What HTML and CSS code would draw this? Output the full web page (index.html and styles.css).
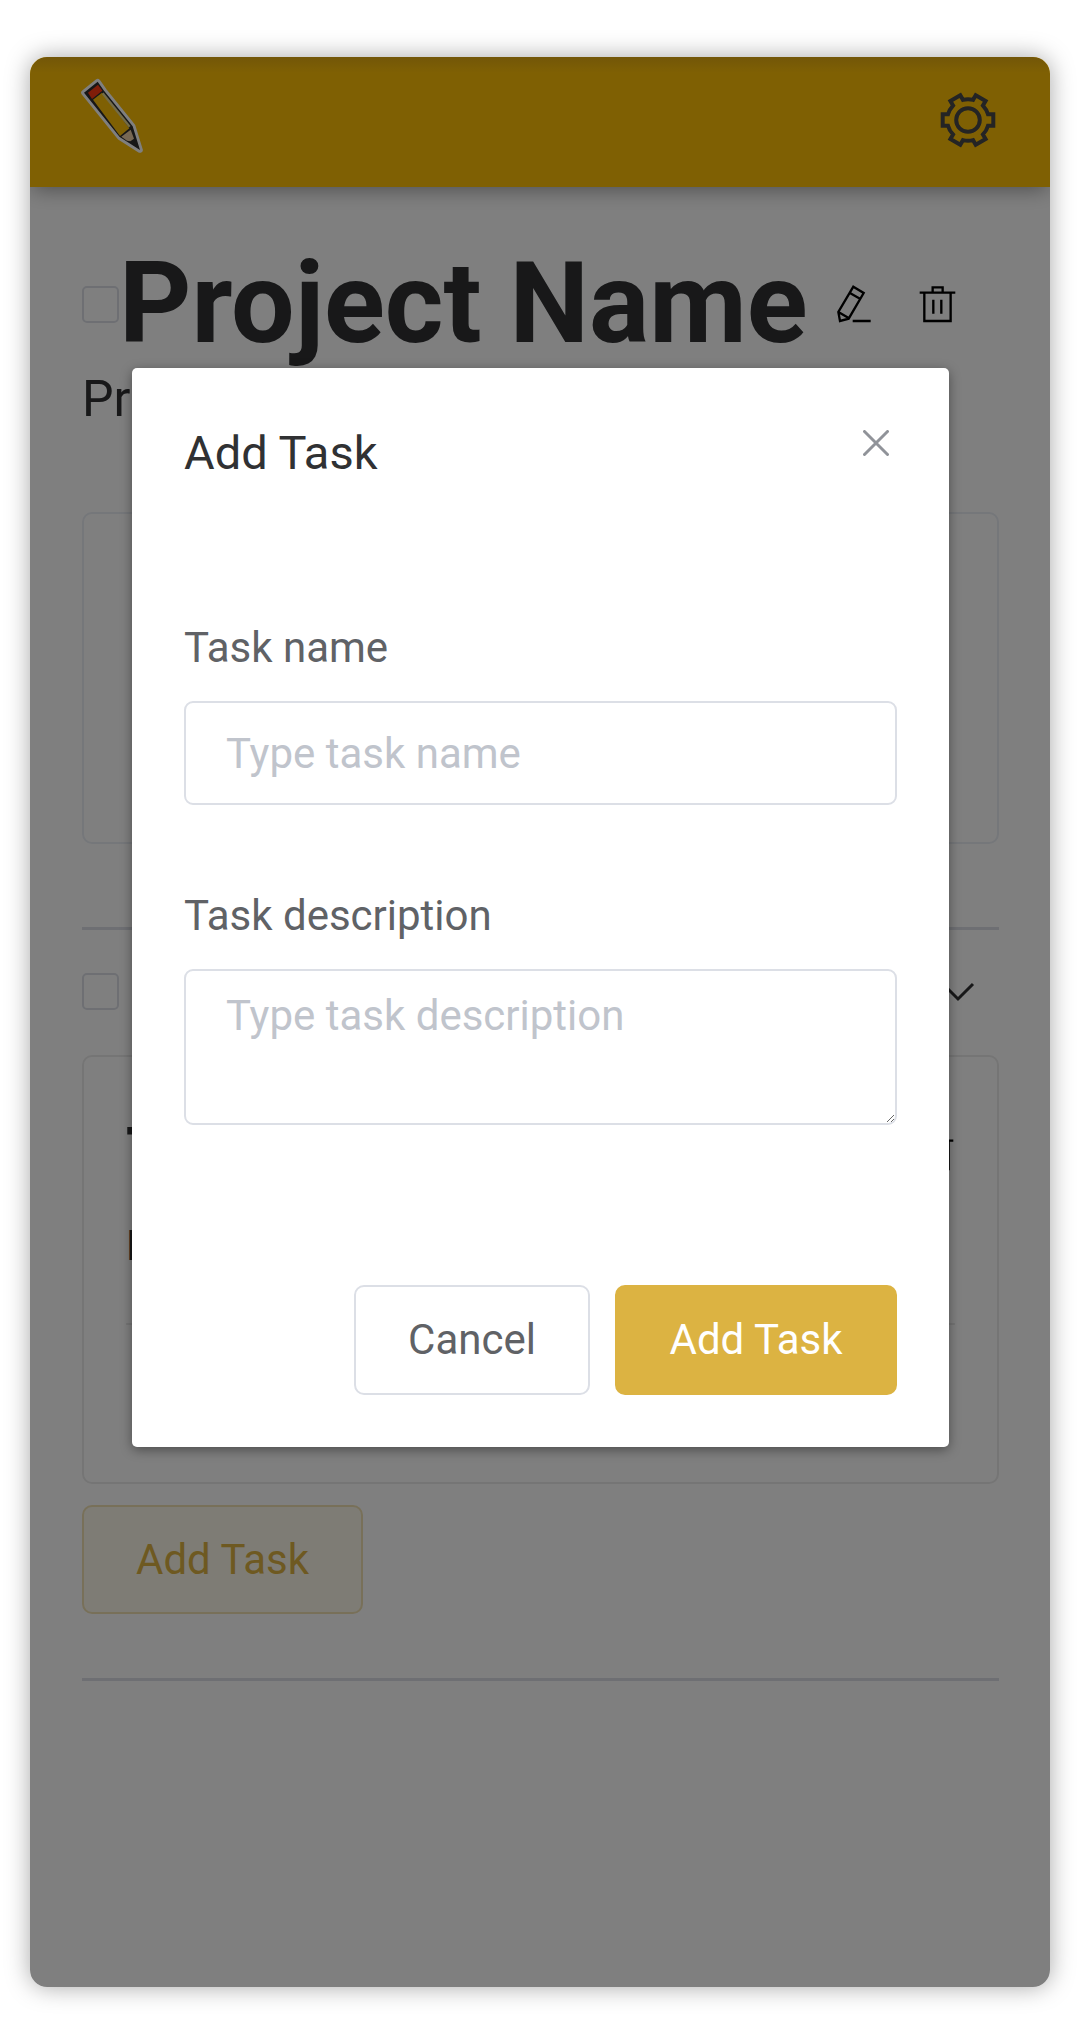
FILE: index.html
```html
<!DOCTYPE html>
<html lang="en">
<head>
<meta charset="utf-8">
<title>Project</title>
<link rel="stylesheet" href="styles.css">
</head>
<body>
<div class="app">
  <header class="topbar">
    <svg class="logo" viewBox="240 145 195 230">
      <path d="M252 189L293 156L312 183L398 290L420 361L359 322Z" fill="#333" stroke="#fff" stroke-width="17" stroke-linejoin="round"/>
      <path d="M252 189L293 156L312 183L398 290L420 361L359 322Z" fill="#2e2e2e"/>
      <path d="M264 189L294 165L307 183L276 208Z" fill="#ff3a12"/>
      <path d="M279 210L306 189L388 296L360 319Z" fill="#ffc107"/>
      <path d="M308 191L389 291" stroke="#e8d890" stroke-width="7"/>
      <path d="M364 321L392 300L402 327L391 335L381 333Z" fill="#efd0a8"/>
    </svg>
    <svg class="gear" viewBox="-28 -28 56 56">
      <path d="M20-5.7H25.3V5.7H20A20.8 20.8 0 0 1 14.94 14.47L17.59 19.06L7.71 24.76L5.06 20.17A20.8 20.8 0 0 1-5.06 20.17L-7.71 24.76L-17.59 19.06L-14.94 14.47A20.8 20.8 0 0 1-20 5.7H-25.3V-5.7H-20A20.8 20.8 0 0 1-14.94-14.47L-17.59-19.06L-7.71-24.76L-5.06-20.17A20.8 20.8 0 0 1 5.06-20.17L7.71-24.76L17.59-19.06L14.94-14.47A20.8 20.8 0 0 1 20-5.7Z"/>
      <circle r="11.8"/>
    </svg>
  </header>
  <main class="content">
    <div class="title-row">
      <span class="checkbox"></span>
      <h1 class="project-name">Project Name</h1>
      <svg class="edit" viewBox="828 160 110 120"><path d="M880 168L911 187L866 264L840 271L835 244ZM871 188L900 204M835 244L866 262M878 271H932"/></svg>
      <svg class="trash" viewBox="1072 160 118 120"><path d="M1077 186H1184M1116 186V170H1146V186M1091 186V271H1170V186M1118 207V249M1142 207V249"/></svg>
    </div>
    <p class="project-desc">Project description</p>
    <section class="summary"></section>
    <hr class="divider">
    <div class="group-row">
      <span class="checkbox"></span>
      <svg class="chevron" viewBox="0 0 34 20"><path d="M2 2L17 17L32 2"/></svg>
    </div>
    <section class="task-card">
      <div class="task-head">
        <h2 class="task-name">Task Name</h2>
        <svg class="trash" viewBox="1072 160 118 120"><path d="M1077 186H1184M1116 186V170H1146V186M1091 186V271H1170V186M1118 207V249M1142 207V249"/></svg>
      </div>
      <p class="task-desc">Description</p>
      <hr class="task-divider">
    </section>
    <button class="btn btn-plain">Add Task</button>
    <hr class="divider">
  </main>
  <div class="overlay">
    <form class="dialog">
      <div class="dialog-head">
        <span class="dialog-title">Add Task</span>
        <svg class="close" viewBox="0 0 26 26"><path d="M1.5 1.5L24.5 24.5M24.5 1.5L1.5 24.5"/></svg>
      </div>
      <label class="label" for="name">Task name</label>
      <input class="field" id="name" placeholder="Type task name">
      <label class="label label-desc" for="desc">Task description</label>
      <textarea class="field area" id="desc" placeholder="Type task description"></textarea>
      <div class="actions">
        <button type="button" class="btn btn-cancel">Cancel</button>
        <button type="button" class="btn btn-primary">Add Task</button>
      </div>
    </form>
  </div>
</div>
</body>
</html>
```
FILE: styles.css
```css
* { box-sizing: border-box; }
body {
  margin: 0;
  height: 2044px;
  overflow: hidden;
  background: #fff;
  color: #303133;
  font-family: Roboto, sans-serif;
  display: flow-root;
}
h1, h2, p, hr { margin: 0; }
hr { border: 0; }
svg { fill: none; flex: none; display: block; }

.app {
  position: relative;
  width: 1020px;
  height: 1930px;
  margin: 57px 30px 0;
  border-radius: 17px;
  overflow: hidden;
  background: #fff;
}
body::before {
  content: "";
  position: absolute;
  z-index: -1;
  left: 30px;
  top: 57px;
  width: 1020px;
  height: 1930px;
  border-radius: 17px;
  box-shadow: 0 0 24px rgba(0, 0, 0, .35);
}

.topbar {
  position: relative;
  display: flex;
  justify-content: space-between;
  align-items: flex-start;
  height: 130px;
  padding: 21px 54px 0 50px;
  background: linear-gradient(#e6ad10, #ffc107 16px);
  box-shadow: 0 5px 20px -3px rgba(0, 0, 0, .4);
}
.logo { width: 65px; height: 76.7px; }
.gear { width: 56px; height: 56px; margin-top: 14px; stroke: #484848; stroke-width: 4; }

.content { padding: 57px 51px 0 52px; }
.title-row { display: flex; align-items: center; height: 120px; }
.checkbox {
  flex: none;
  width: 37px;
  height: 37px;
  border: 2.6px solid #dcdfe6;
  border-radius: 5px;
}
.project-name { width: 718px; font-size: 112.6px; line-height: 120px; white-space: nowrap; }
.edit { width: 36.7px; height: 40px; stroke: #000; stroke-width: 7; margin-left: -1px; }
.trash { width: 39.3px; height: 40px; stroke: #000; stroke-width: 7; }
.title-row .trash { margin-left: 45px; }
.project-desc { height: 60px; margin-top: 5px; font-size: 50px; line-height: 60px; }
.summary { height: 332px; margin-top: 83px; border: 2.6px solid #ebeef5; border-radius: 10px; }
.divider { height: 2.6px; background: #dcdfe6; }
.summary + .divider { margin-top: 83px; }
.group-row { display: flex; align-items: center; justify-content: space-between; margin-top: 43px; padding-right: 24px; }
.chevron { width: 34px; height: 20px; margin-top: 2px; stroke: #303133; stroke-width: 3; }
.task-card { height: 429px; margin-top: 45px; padding: 50px 42px 0; border: 2.6px solid #ebebeb; border-radius: 10px; }
.task-head { display: flex; justify-content: space-between; align-items: center; height: 90px; }
.task-name { font-size: 64px; line-height: 90px; }
.task-desc { margin-top: 24px; font-size: 42px; line-height: 50px; }
.task-divider { height: 2.6px; margin-top: 52px; background: #ebebeb; }

.btn {
  height: 109.5px;
  padding: 0;
  border: 2.6px solid #dcdfe6;
  border-radius: 10px;
  background: #fff;
  color: #606266;
  font: 42px Roboto, sans-serif;
}
.btn-plain { display: block; width: 281px; margin: 21px 0 64px; background: #fcf8ea; border-color: #f1e1b3; color: #dcb342; }
.btn-cancel { width: 236px; }
.btn-primary { width: 282px; background: #dcb342; border-color: #dcb342; color: #fff; }

.overlay { position: absolute; inset: 0; background: rgba(0, 0, 0, .5); }
.dialog {
  width: 817px;
  height: 1079px;
  margin: 311px 0 0 102px;
  padding: 52px;
  border-radius: 5px;
  background: #fff;
  box-shadow: 0 3px 12px rgba(0, 0, 0, .4);
}
.dialog-head { display: flex; justify-content: space-between; padding-right: 8px; height: 187px; }
.dialog-title { font-size: 47px; line-height: 66px; }
.close { width: 26px; height: 26px; margin-top: 10px; stroke: #909399; stroke-width: 3; stroke-linecap: round; }
.label { display: block; height: 94px; font-size: 42px; line-height: 82px; color: #606266; }
.field {
  display: block;
  width: 713px;
  height: 104px;
  padding: 0 40px;
  border: 2.6px solid #dcdfe6;
  border-radius: 9px;
  background: #fff;
  font: 42px Roboto, sans-serif;
}
.field::placeholder { color: #c0c4cc; opacity: 1; }
.label-desc { margin-top: 70px; }
.area { height: 156px; padding: 13px 40px; line-height: 63px; }
.actions { display: flex; justify-content: flex-end; gap: 25px; margin-top: 160px; }
```
